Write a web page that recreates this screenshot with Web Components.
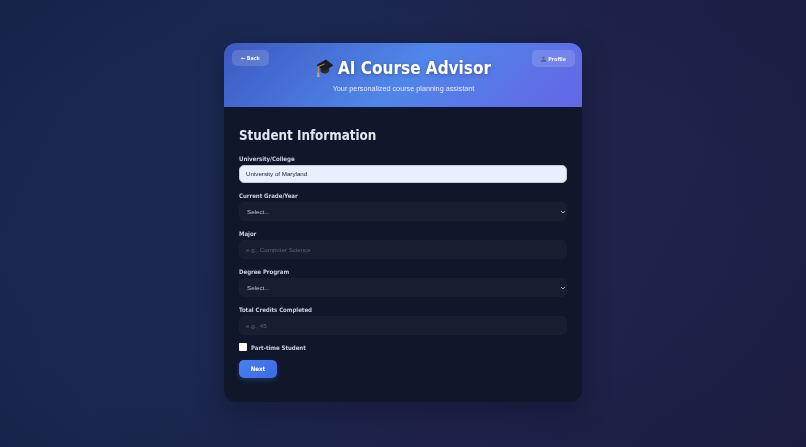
<!DOCTYPE html>
<html lang="en">
<head>
<meta charset="utf-8">
<title>AI Course Advisor</title>
<style>
  html, body { margin: 0; height: 100%; }
  body {
    background:
      radial-gradient(ellipse at center, transparent 55%, rgba(10, 14, 40, 0.18) 100%),
      linear-gradient(115deg, #1a2750 0%, #1b2952 28%, #1f234b 62%, #1f1f45 100%);
    font-family: "DejaVu Sans Condensed", "DejaVu Sans", Verdana, sans-serif;
    overflow: hidden;
  }
</style>
</head>
<body>
<advisor-page>
  <advisor-card>
    <advisor-header slot="header" title-text="AI Course Advisor" subtitle="Your personalized course planning assistant"></advisor-header>
    <h-section heading="Student Information">
      <form-field label="University/College" type="text" value="University of Maryland" filled></form-field>
      <form-field label="Current Grade/Year" type="select"></form-field>
      <form-field label="Major" type="text" placeholder="e.g., Computer Science"></form-field>
      <form-field label="Degree Program" type="select"></form-field>
      <form-field label="Total Credits Completed" type="text" placeholder="e.g., 45"></form-field>
      <check-field label="Part-time Student"></check-field>
      <primary-button>Next</primary-button>
    </h-section>
  </advisor-card>
</advisor-page>

<script>
const REGULAR = `"Liberation Sans", Arial, sans-serif`;

class AdvisorPage extends HTMLElement {
  constructor() {
    super();
    this.attachShadow({ mode: "open" });
    this.shadowRoot.innerHTML = `
      <style>
        :host { display: flex; justify-content: center; padding-top: 43px; filter: blur(0.3px); }
      </style>
      <slot></slot>
    `;
  }
}

class AdvisorCard extends HTMLElement {
  constructor() {
    super();
    this.attachShadow({ mode: "open" });
    this.shadowRoot.innerHTML = `
      <style>
        :host {
          display: block;
          width: 358px;
          height: 359px;
          border-radius: 12px;
          overflow: hidden;
          background: #10172a;
          box-shadow: 0 8px 28px rgba(0, 0, 0, 0.28);
        }
      </style>
      <slot name="header"></slot>
      <slot></slot>
    `;
  }
}

class AdvisorHeader extends HTMLElement {
  constructor() {
    super();
    this.attachShadow({ mode: "open" });
    const title = this.getAttribute("title-text");
    const subtitle = this.getAttribute("subtitle");
    this.shadowRoot.innerHTML = `
      <style>
        :host {
          display: grid;
          grid-template-columns: 1fr auto 1fr;
          height: 64px;
          box-sizing: border-box;
          padding: 7px 7px 0 8px;
          color: #fff;
          background: linear-gradient(135deg, #3d59c2 0%, #5086e9 50%, #6466e6 100%);
        }
        .center { text-align: center; padding-top: 6px; }
        h1 {
          margin: 0;
          font-size: 17px;
          line-height: 24px;
          font-weight: 700;
          display: flex;
          align-items: center;
          justify-content: center;
          gap: 4px;
          text-shadow: 0 1px 4px rgba(0, 0, 0, 0.3);
          white-space: nowrap;
        }
        h1 svg { width: 18px; height: 20px; flex: none; }
        p { margin: 3px 0 0; font: 7.300px/12px ${REGULAR}; letter-spacing: -0.02px; color: #e4eaff; }
        .left, .right { display: flex; align-items: flex-start; }
        .right { justify-content: flex-end; }
        .user { width: 5px; height: 6px; margin-right: 2px; }
      </style>
      <div class="left"><pill-button>← Back</pill-button></div>
      <div class="center">
        <h1>
          <svg viewBox="0 0 18 20" aria-hidden="true">
            <path d="M4.500 9v4.500c1.300 1.600 3 2.200 5 1.900 1.500-.3 2.800-1 3.700-2.200V8.500z" fill="#2a2a30"/>
            <path d="M.5 7 10 1.500 17.500 7.500 8 13z" fill="#1c1c22"/>
            <path d="M8.500 6 2.500 8.500 2.200 14.500" fill="none" stroke="#b98f58" stroke-width="1"/>
            <path d="M1.400 14.500h1.700l.6 4.500H.9z" fill="#c9a36d"/>
          </svg>
          <span>${title}</span>
        </h1>
        <p>${subtitle}</p>
      </div>
      <div class="right"><pill-button tall>
        <svg class="user" viewBox="0 0 10 12" aria-hidden="true">
          <circle cx="5" cy="3.500" r="2.500" fill="#56659a"/>
          <path d="M0 12c0-3.500 2.200-5 5-5s5 1.500 5 5z" fill="#56659a"/>
        </svg>Profile</pill-button></div>
    `;
  }
}

class PillButton extends HTMLElement {
  constructor() {
    super();
    this.attachShadow({ mode: "open" });
    this.shadowRoot.innerHTML = `
      <style>
        :host {
          display: inline-flex;
          align-items: center;
          justify-content: center;
          height: 16px;
          padding: 0 9px;
          border-radius: 5px;
          background: rgba(255, 255, 255, 0.15);
          color: #f2f5ff;
          font-size: 5.400px;
          font-weight: 700;
          white-space: nowrap;
        }
        :host([tall]) { height: 17px; }
      </style>
      <slot></slot>
    `;
  }
}

class HSection extends HTMLElement {
  constructor() {
    super();
    this.attachShadow({ mode: "open" });
    this.shadowRoot.innerHTML = `
      <style>
        :host { display: block; padding: 18.500px 15px 0; }
        h2 {
          margin: 0 0 8px;
          font-size: 13.300px;
          line-height: 20px;
          font-weight: 700;
          color: #e3e7f3;
        }
      </style>
      <h2>${this.getAttribute("heading")}</h2>
      <slot></slot>
    `;
  }
}

class FormField extends HTMLElement {
  constructor() {
    super();
    this.attachShadow({ mode: "open" });
    const label = this.getAttribute("label");
    const isSelect = this.getAttribute("type") === "select";
    const control = isSelect
      ? `<div class="wrap"><select><option>Select...</option></select>
           <svg viewBox="0 0 8 8" aria-hidden="true"><path d="M2 3 4 5 6 3" fill="none" stroke="#a8adbb" stroke-width="1"/></svg></div>`
      : `<input type="text" value="${this.getAttribute("value") || ""}" placeholder="${this.getAttribute("placeholder") || ""}">`;
    this.shadowRoot.innerHTML = `
      <style>
        :host { display: block; margin-bottom: 8px; }
        label {
          display: block;
          margin-bottom: 2px;
          font-size: 6.100px;
          letter-spacing: -0.05px;
          line-height: 9px;
          font-weight: 700;
          color: #c9cedd;
        }
        input, select {
          display: block;
          width: 100%;
          height: 19px;
          box-sizing: border-box;
          padding: 0 6px;
          border: 1px solid #1a2032;
          border-radius: 5px;
          background: #181e2f;
          color: #c0c4d0;
          font: 6.200px ${REGULAR};
          outline: none;
        }
        select { appearance: none; padding-left: 7px; }
        .wrap { position: relative; }
        .wrap svg { position: absolute; right: 0; top: 6px; width: 8px; height: 8px; }
        input::placeholder { color: #5f6475; opacity: 1; }
        :host([filled]) input {
          background: #e8effe;
          border-color: #c4cad9;
          color: #1a1d28;
          height: 18px;
          margin-bottom: 1px;
        }
      </style>
      <label>${label}</label>
      ${control}
    `;
  }
}

class CheckField extends HTMLElement {
  constructor() {
    super();
    this.attachShadow({ mode: "open" });
    this.shadowRoot.innerHTML = `
      <style>
        :host {
          display: flex;
          align-items: center;
          gap: 4px;
          height: 9px;
          margin: 5px 0 4.500px;
          font-size: 6.100px;
          letter-spacing: -0.05px;
          font-weight: 700;
          color: #c9cedd;
        }
        input {
          width: 8px;
          height: 8px;
          margin: 0;
          appearance: none;
          background: #fff;
          border-radius: 1px;
        }
      </style>
      <input type="checkbox" id="box">
      <label for="box">${this.getAttribute("label")}</label>
    `;
  }
}

class PrimaryButton extends HTMLElement {
  constructor() {
    super();
    this.attachShadow({ mode: "open" });
    this.shadowRoot.innerHTML = `
      <style>
        :host {
          display: inline-flex;
          align-items: center;
          justify-content: center;
          width: 38px;
          height: 18px;
          border-radius: 5px;
          background: linear-gradient(135deg, #4a80f0, #3b6be0);
          box-shadow: 0 2px 5px rgba(60, 110, 230, 0.3);
          color: #fff;
          font-size: 6.100px;
          font-weight: 700;
        }
      </style>
      <slot></slot>
    `;
  }
}

customElements.define("advisor-page", AdvisorPage);
customElements.define("advisor-card", AdvisorCard);
customElements.define("advisor-header", AdvisorHeader);
customElements.define("pill-button", PillButton);
customElements.define("h-section", HSection);
customElements.define("form-field", FormField);
customElements.define("check-field", CheckField);
customElements.define("primary-button", PrimaryButton);
</script>
</body>
</html>
